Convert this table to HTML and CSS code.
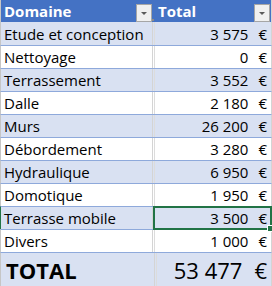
FILE: index.html
```html
<!DOCTYPE html>
<html>
<head>
    <title>Budget travaux</title>
    <meta charset="utf-8">
    <link rel="stylesheet" href="styles.css">
</head>
<body>
    <div id="sheet">
        <div class="row header">
            <div class="cell name">Domaine<span class="filter marked"></span></div>
            <div class="cell amount">Total<span class="filter"></span></div>
        </div>
        <div class="row band first">
            <div class="cell name">Etude et conception</div>
            <div class="cell amount"><span class="value">3 575</span><span class="euro">€</span></div>
        </div>
        <div class="row">
            <div class="cell name">Nettoyage</div>
            <div class="cell amount"><span class="value">0</span><span class="euro">€</span></div>
        </div>
        <div class="row band">
            <div class="cell name">Terrassement</div>
            <div class="cell amount"><span class="value">3 552</span><span class="euro">€</span></div>
        </div>
        <div class="row">
            <div class="cell name">Dalle</div>
            <div class="cell amount"><span class="value">2 180</span><span class="euro">€</span></div>
        </div>
        <div class="row band">
            <div class="cell name">Murs</div>
            <div class="cell amount"><span class="value">26 200</span><span class="euro">€</span></div>
        </div>
        <div class="row">
            <div class="cell name">Débordement</div>
            <div class="cell amount"><span class="value">3 280</span><span class="euro">€</span></div>
        </div>
        <div class="row band">
            <div class="cell name">Hydraulique</div>
            <div class="cell amount"><span class="value">6 950</span><span class="euro">€</span></div>
        </div>
        <div class="row">
            <div class="cell name">Domotique</div>
            <div class="cell amount"><span class="value">1 950</span><span class="euro">€</span></div>
        </div>
        <div class="row band active">
            <div class="cell name">Terrasse mobile</div>
            <div class="cell amount selected"><span class="value">3 500</span><span class="euro">€</span></div>
        </div>
        <div class="row">
            <div class="cell name">Divers</div>
            <div class="cell amount"><span class="value">1 000</span><span class="euro">€</span></div>
        </div>
        <div class="row band total">
            <div class="cell name">TOTAL</div>
            <div class="cell amount"><span class="value">53 477</span><span class="euro">€</span></div>
        </div>
    </div>
</body>
</html>
```

FILE: styles.css
```css
body {
    margin: 0;
    background: #fff;
    font-family: 'Open Sans', 'Liberation Sans', sans-serif;
    font-size: 15px;
    color: #000;
    overflow: hidden;
}

#sheet {
    width: 272px;
}

.row {
    display: flex;
    height: 22px;
    border-top: 1px solid #8ea9db;
    border-left: 1px solid #c6c6c6;
    border-right: 1px solid #d4d4d4;
    background: #fff;
}

.row.band {
    background: #d9e1f2;
}

.row.first {
    height: 23px;
    border-top: none;
}

.row.active {
    border-left-color: #217346;
}

.cell {
    display: flex;
    align-items: center;
    white-space: nowrap;
}

.name {
    width: 148px;
    padding-left: 3px;
    border-right: 1px solid #d4d4d4;
}

.amount {
    position: relative;
    flex: 1;
    margin-left: 1px;
    padding-right: 4px;
    justify-content: flex-end;
    border-left: 1px solid #dcdcdc;
}

.euro {
    margin-left: 10px;
}

/* header row */
.header {
    border-top: none;
    background: #4472c4;
    color: #fff;
    font-weight: bold;
}

.header .name {
    border-right-color: transparent;
}

.header .amount {
    justify-content: flex-start;
    padding-left: 3px;
    padding-right: 1px;
    border-left-color: transparent;
}

.filter {
    position: relative;
    align-self: flex-end;
    margin-left: auto;
    width: 14px;
    height: 16px;
    border: 1px solid #a6a6a6;
    background: #f0f0f0;
}

.filter::after {
    content: '';
    position: absolute;
    left: 4px;
    top: 7px;
    border-left: 3px solid transparent;
    border-right: 3px solid transparent;
    border-top: 3px solid #5a5a5a;
}

.filter.marked::before {
    content: '';
    position: absolute;
    right: -3px;
    bottom: 0;
    width: 2px;
    height: 2px;
    background: #8c8c8c;
}

/* selected cell outline with its fill handle */
.selected::after {
    content: '';
    position: absolute;
    left: -2px;
    top: -1px;
    right: -1px;
    bottom: -1px;
    border: 2px solid #217346;
}

.selected::before {
    content: '';
    position: absolute;
    right: -3px;
    bottom: -3px;
    width: 5px;
    height: 5px;
    background: #217346;
    border: 1px solid #fff;
    z-index: 1;
}

/* grand total */
.total {
    height: 34px;
    font-size: 22px;
}

.total .name {
    padding-left: 5px;
    font-weight: bold;
}

.total .euro {
    margin-left: 12px;
}
```
